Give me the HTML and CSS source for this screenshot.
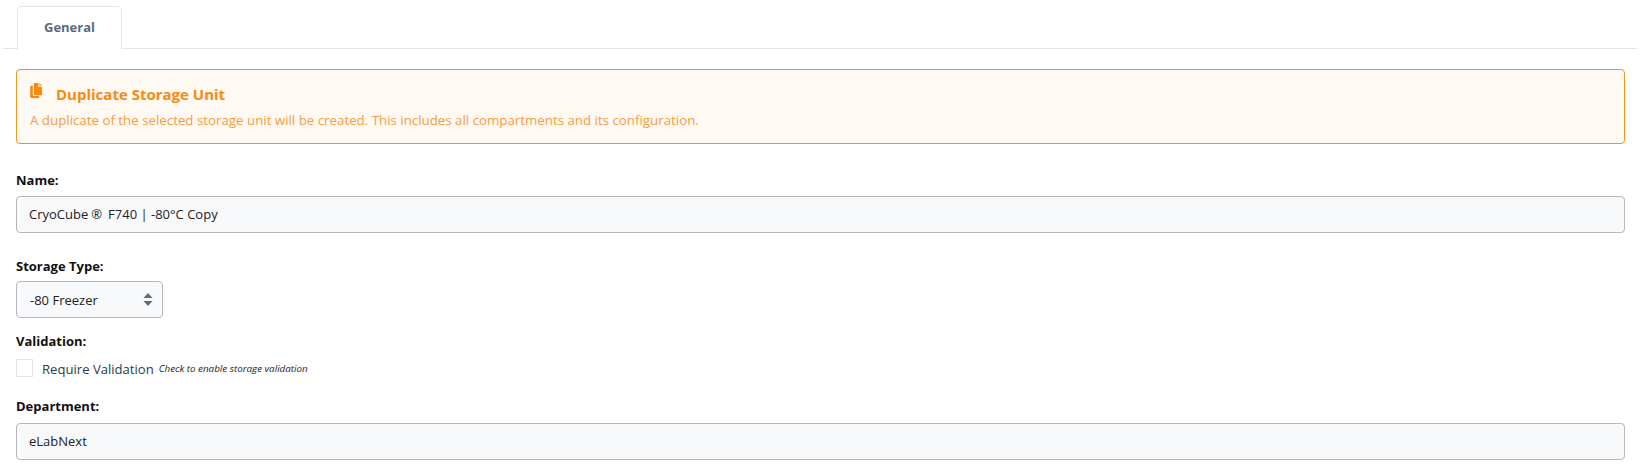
FILE: index.html
```html
<!DOCTYPE html>
<html lang="en">
<head>
<meta charset="utf-8">
<title>Duplicate Storage Unit</title>
<link rel="stylesheet" href="styles.css">
</head>
<body>
<div class="tabs"><div class="tab">General</div></div>
<main class="content">
  <section class="alert">
    <h2 class="alert-title">
      <svg class="alert-icon" viewBox="0 0 14 16" aria-hidden="true"><path d="M5 0h4v4h4v8.2a.8.8 0 0 1-.8.8H5a.8.8 0 0 1-.8-.8V.8A.8.8 0 0 1 5 0zM10 0l3 3h-3zM3 3v10.2c0 .4.4.8.8.8H10v1.2a.8.8 0 0 1-.8.8H1a.8.8 0 0 1-.8-.8V3.8A.8.8 0 0 1 1 3z"/></svg>
      <span>Duplicate Storage Unit</span>
    </h2>
    <p class="alert-text">A duplicate of the selected storage unit will be created. This includes all compartments and its configuration.</p>
  </section>
  <div class="field name-field">
    <label class="label">Name:</label>
    <div class="input">CryoCube<span class="reg">®</span>F740 | -80°C Copy</div>
  </div>
  <div class="field type-field">
    <label class="label">Storage Type:</label>
    <div class="select">
      <span class="select-value">-80 Freezer</span>
      <svg class="select-arrows" viewBox="0 0 10 13" aria-hidden="true"><path d="M5 0l4.5 5H.5zM5 13L.5 8h9z"/></svg>
    </div>
  </div>
  <div class="field validation-field">
    <label class="label">Validation:</label>
    <div class="check-row">
      <span class="checkbox"></span>
      <span class="check-label">Require Validation</span>
      <em class="hint">Check to enable storage validation</em>
    </div>
  </div>
  <div class="field dept-field">
    <label class="label">Department:</label>
    <div class="input">eLabNext</div>
  </div>
</main>
</body>
</html>
```
FILE: styles.css
```css
* { box-sizing: border-box; }
html, body { margin: 0; padding: 0; background: #fff; }
body {
  width: 1641px;
  height: 471px;
  overflow: hidden;
  font-family: "Open Sans", "Noto Sans", sans-serif;
  font-size: 13px;
  color: #212529;
}
.tabs {
  margin: 0 4px 0 3px;
  padding: 6px 0 0 14px;
  height: 49px;
  border-bottom: 1px solid #e2e5ec;
}
.tab {
  width: 105px;
  height: 43px;
  border: 1px solid #e2e5ec;
  border-bottom: 0;
  border-radius: 5px 5px 0 0;
  background: #fff;
  color: #5a6b7d;
  font-weight: 700;
  font-size: 13px;
  line-height: 41px;
  text-align: center;
}
.content { padding: 20px 16px 0; }
.alert {
  height: 75px;
  border: 1px solid #e8981f;
  border-radius: 4px;
  background: #fff9f3;
  padding: 11px 13px;
  color: #f79c45;
}
.alert-title {
  display: flex;
  align-items: center;
  margin: 0;
  height: 26px;
  font-size: 15px;
  font-weight: 700;
  color: #f68b0f;
}
.alert-icon {
  width: 13px;
  height: 15px;
  margin: -8px 13px 0 0;
  fill: #f68b0f;
}
.alert-text { margin: 3px 0 0; font-size: 13.3px; line-height: 20px; }
.field { display: flex; flex-direction: column; }
.label {
  color: #111;
  font-weight: 700;
  font-size: 13px;
  line-height: 18px;
}
.input, .select {
  border: 1px solid #b5b7ba;
  border-radius: 4px;
  background: #f8f9fb;
  color: #222;
  padding: 0 12px;
  height: 37px;
  line-height: 35px;
}
.reg { margin: 0 6px 0 3px; }
.name-field { margin-top: 27px; }
.name-field .label { margin-bottom: 7px; }
.dept-field .label { margin-bottom: 8px; }
.type-field { margin-top: 24px; }
.type-field .label { margin-bottom: 6px; }
.select {
  width: 147px;
  display: flex;
  align-items: center;
  justify-content: space-between;
  padding: 0 9px 0 13px;
}
.select-value { padding-top: 1px; }
.select-arrows { width: 10px; height: 13px; fill: #5d6d7e; }
.validation-field { margin-top: 14px; }
.check-row { display: flex; align-items: center; margin-top: 9px; height: 18px; }
.checkbox {
  width: 17px;
  height: 18px;
  border: 1px solid #e3e5e8;
  background: #fff;
  margin-right: 9px;
}
.check-label { color: #2e3a47; font-size: 13.1px; padding-top: 1px; }
.hint { font-size: 9.8px; margin-left: 5px; color: #222; padding-top: 1px; }
.dept-field { margin-top: 20px; }
```
